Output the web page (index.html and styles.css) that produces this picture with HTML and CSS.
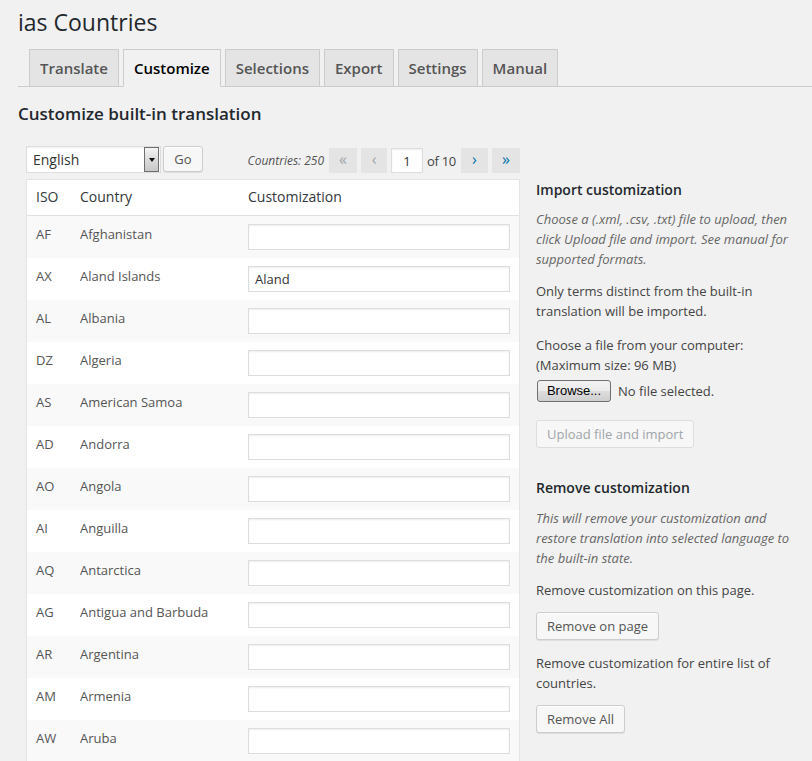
FILE: index.html
```html
<!DOCTYPE html>
<html>
<head>
<meta charset="utf-8">
<title>ias Countries</title>
<link rel="stylesheet" href="styles.css">
</head>
<body>
<h1 class="title">ias Countries</h1>
<nav class="nav-tabs">
  <a class="nav-tab">Translate</a>
  <a class="nav-tab active">Customize</a>
  <a class="nav-tab">Selections</a>
  <a class="nav-tab">Export</a>
  <a class="nav-tab">Settings</a>
  <a class="nav-tab">Manual</a>
</nav>
<h2 class="section-title">Customize built-in translation</h2>
<div class="main">
  <div class="left">
    <div class="controls">
      <div class="lang-group">
        <div class="select-box">
          <select class="lang"><option>English</option></select>
          <span class="select-arrow"><span class="tri"></span></span>
        </div>
        <button class="btn go">Go</button>
      </div>
      <div class="pagination">
        <span class="count">Countries: 250</span>
        <span class="pg disabled w28">«</span>
        <span class="pg disabled w26">‹</span>
        <input class="page-input" type="text" value="1">
        <span class="of">of 10</span>
        <span class="pg w27">›</span>
        <span class="pg w28">»</span>
      </div>
    </div>
    <table class="list">
      <colgroup><col class="c-iso"><col class="c-country"><col></colgroup>
      <thead>
        <tr><th>ISO</th><th>Country</th><th>Customization</th></tr>
      </thead>
      <tbody>
        <tr><td>AF</td><td>Afghanistan</td><td><input class="txt" type="text"></td></tr>
        <tr><td>AX</td><td>Aland Islands</td><td><input class="txt" type="text" value="Aland"></td></tr>
        <tr><td>AL</td><td>Albania</td><td><input class="txt" type="text"></td></tr>
        <tr><td>DZ</td><td>Algeria</td><td><input class="txt" type="text"></td></tr>
        <tr><td>AS</td><td>American Samoa</td><td><input class="txt" type="text"></td></tr>
        <tr><td>AD</td><td>Andorra</td><td><input class="txt" type="text"></td></tr>
        <tr><td>AO</td><td>Angola</td><td><input class="txt" type="text"></td></tr>
        <tr><td>AI</td><td>Anguilla</td><td><input class="txt" type="text"></td></tr>
        <tr><td>AQ</td><td>Antarctica</td><td><input class="txt" type="text"></td></tr>
        <tr><td>AG</td><td>Antigua and Barbuda</td><td><input class="txt" type="text"></td></tr>
        <tr><td>AR</td><td>Argentina</td><td><input class="txt" type="text"></td></tr>
        <tr><td>AM</td><td>Armenia</td><td><input class="txt" type="text"></td></tr>
        <tr><td>AW</td><td>Aruba</td><td><input class="txt" type="text"></td></tr>
        <tr><td>AU</td><td>Australia</td><td><input class="txt" type="text"></td></tr>
        <tr><td>AT</td><td>Austria</td><td><input class="txt" type="text"></td></tr>
        <tr><td>AZ</td><td>Azerbaijan</td><td><input class="txt" type="text"></td></tr>
      </tbody>
    </table>
  </div>
  <aside class="side">
    <h3 class="side-title">Import customization</h3>
    <p class="description">Choose a (.xml, .csv, .txt) file to upload, then click Upload file and import. See manual for supported formats.</p>
    <p class="note">Only terms distinct from the built-in translation will be imported.</p>
    <p class="note choose">Choose a file from your computer: (Maximum size: 96 MB)</p>
    <div class="file-row">
      <button class="browse">Browse...</button>
      <span class="file-status">No file selected.</span>
    </div>
    <button class="btn disabled upload">Upload file and import</button>
    <h3 class="side-title remove-title">Remove customization</h3>
    <p class="description">This will remove your customization and restore translation into selected language to the built-in state.</p>
    <p class="note">Remove customization on this page.</p>
    <button class="btn block-btn">Remove on page</button>
    <p class="note">Remove customization for entire list of countries.</p>
    <button class="btn block-btn">Remove All</button>
  </aside>
</div>
</body>
</html>
```
FILE: styles.css
```css
html, body {
  background: #f1f1f1;
}
body {
  margin: 0;
  padding: 8px 20px 0 18px;
  font-family: "Open Sans", "DejaVu Sans", sans-serif;
  font-size: 13px;
  line-height: 20px;
  color: #444;
}
.title {
  margin: 0;
  font-size: 23px;
  font-weight: 400;
  line-height: 29px;
  color: #23282d;
}
.nav-tabs {
  display: flex;
  margin: 12px -20px 0 0;
  padding-left: 5px;
  border-bottom: 1px solid #ccc;
}
.nav-tab {
  display: block;
  margin: 0 0 -1px 4px;
  padding: 6px 10px;
  line-height: 24px;
  font-size: 15px;
  font-weight: 600;
  color: #555;
  background: #e4e4e4;
  border: 1px solid #ccc;
  text-decoration: none;
}
.nav-tab:first-child {
  margin-left: 6px;
}
.nav-tab.active {
  background: #f1f1f1;
  color: #000;
  border-bottom-color: #f1f1f1;
}
.section-title {
  margin: 16px 0 0;
  font-size: 17px;
  font-weight: 600;
  line-height: 22px;
  color: #23282d;
}
.main {
  display: flex;
  margin: 21px 0 0 8px;
  gap: 16px;
  align-items: flex-start;
}
.left {
  width: 494px;
  flex: none;
}
.controls {
  display: flex;
  justify-content: space-between;
  align-items: flex-start;
}
.lang-group {
  display: flex;
  align-items: flex-start;
  gap: 2px;
}
.select-box {
  display: flex;
  width: 135px;
  height: 27px;
  box-sizing: border-box;
  background: #fff;
  border: 1px solid #ddd;
  box-shadow: inset 0 1px 2px rgba(0,0,0,.07);
}
.lang {
  flex: 1;
  min-width: 0;
  appearance: none;
  -webkit-appearance: none;
  border: 0;
  background: transparent;
  font-family: "Open Sans", sans-serif;
  font-size: 14px;
  color: #333;
  padding: 0 0 0 6px;
  margin: 0;
  outline: none;
}
.select-arrow {
  width: 15px;
  margin: 0 1px 0 0;
  box-sizing: border-box;
  border: 1px solid #6f6f6f;
  background: linear-gradient(#f4f4f4, #dcdcdc 50%, #c8c8c8);
  display: flex;
  align-items: center;
  justify-content: center;
}
.tri {
  width: 0;
  height: 0;
  border-left: 3px solid transparent;
  border-right: 3px solid transparent;
  border-top: 4px solid #111;
}
.btn {
  display: inline-block;
  box-sizing: border-box;
  height: 28px;
  padding: 0 10px 1px;
  font-family: "Open Sans", sans-serif;
  font-size: 13px;
  line-height: 26px;
  color: #555;
  background: #f7f7f7;
  border: 1px solid #ccc;
  border-radius: 3px;
  box-shadow: inset 0 1px 0 #fff, 0 1px 0 rgba(0,0,0,.08);
  cursor: pointer;
}
.btn.go {
  width: 40px;
  height: 26px;
  line-height: 24px;
  padding: 0;
}
.btn.disabled {
  color: #a0a5aa;
  border-color: #ddd;
  background: #f7f7f7;
  box-shadow: none;
}
.pagination {
  display: flex;
  align-items: center;
  gap: 4px;
  margin-top: 2px;
  height: 25px;
}
.count {
  font-style: italic;
  font-size: 12px;
  color: #555;
  margin-right: 1px;
}
.pg {
  display: flex;
  align-items: center;
  justify-content: center;
  height: 25px;
  padding-bottom: 3px;
  box-sizing: border-box;
  background: #e4e4e4;
  color: #0073aa;
  font-size: 16px;
  line-height: 20px;
}
.pg.disabled {
  color: #a0a5aa;
}
.w28 { width: 28px; }
.w26 { width: 26px; }
.w27 { width: 27px; }
.page-input {
  width: 32px;
  height: 25px;
  box-sizing: border-box;
  border: 1px solid #ddd;
  background: #fff;
  font-family: "Open Sans", sans-serif;
  font-size: 13px;
  text-align: center;
  color: #333;
  padding: 0;
  margin: 0;
  box-shadow: inset 0 1px 2px rgba(0,0,0,.07);
}
.of {
  font-size: 13px;
  color: #444;
  letter-spacing: -0.3px;
  margin-right: 1px;
}
.list {
  margin-top: 6px;
  width: 494px;
  border-collapse: separate;
  border-spacing: 0;
  background: #fff;
  border: 1px solid #e5e5e5;
  box-shadow: 0 1px 1px rgba(0,0,0,.04);
  table-layout: fixed;
}
.c-iso { width: 44px; }
.c-country { width: 168px; }
.list th {
  text-align: left;
  font-weight: 400;
  font-size: 14px;
  line-height: 19px;
  color: #32373c;
  padding: 7px 9px 9px;
  border-bottom: 1px solid #e1e1e1;
}
.list td {
  padding: 8px 9px;
  vertical-align: top;
  color: #555;
  font-size: 13px;
  line-height: 20px;
}
.list tbody tr:nth-child(odd) td {
  background: #f9f9f9;
}
.txt {
  display: block;
  width: 100%;
  height: 26px;
  box-sizing: border-box;
  margin: 0;
  padding: 0 6px;
  border: 1px solid #ddd;
  background: #fff;
  box-shadow: inset 0 1px 2px rgba(0,0,0,.07);
  font-family: "Open Sans", sans-serif;
  font-size: 13px;
  color: #333;
}
.side {
  flex: 1;
  padding-top: 34px;
}
.side-title {
  margin: 0 0 9px;
  font-size: 14px;
  font-weight: 600;
  line-height: 20px;
  color: #23282d;
}
.side p {
  margin: 0 0 12px;
}
.description {
  font-style: italic;
  color: #666;
}
.side p.choose {
  margin-top: 14px;
  margin-bottom: 5px;
}
.file-row {
  display: flex;
  align-items: center;
  gap: 7px;
  height: 21px;
  padding-left: 1px;
}
.browse {
  width: 74px;
  height: 22px;
  box-sizing: border-box;
  padding: 0;
  border: 1px solid #707070;
  border-radius: 3px;
  background: linear-gradient(#f2f2f2, #ebebeb 50%, #dddddd 50%, #cfcfcf);
  font-family: "Liberation Sans", Arial, sans-serif;
  font-size: 13px;
  color: #000;
}
.file-status {
  color: #444;
}
.upload {
  display: block;
  margin-top: 19px;
}
.side-title.remove-title {
  margin-top: 30px;
  margin-bottom: 10px;
}
.block-btn {
  display: block;
  margin-bottom: 13px;
}
```
